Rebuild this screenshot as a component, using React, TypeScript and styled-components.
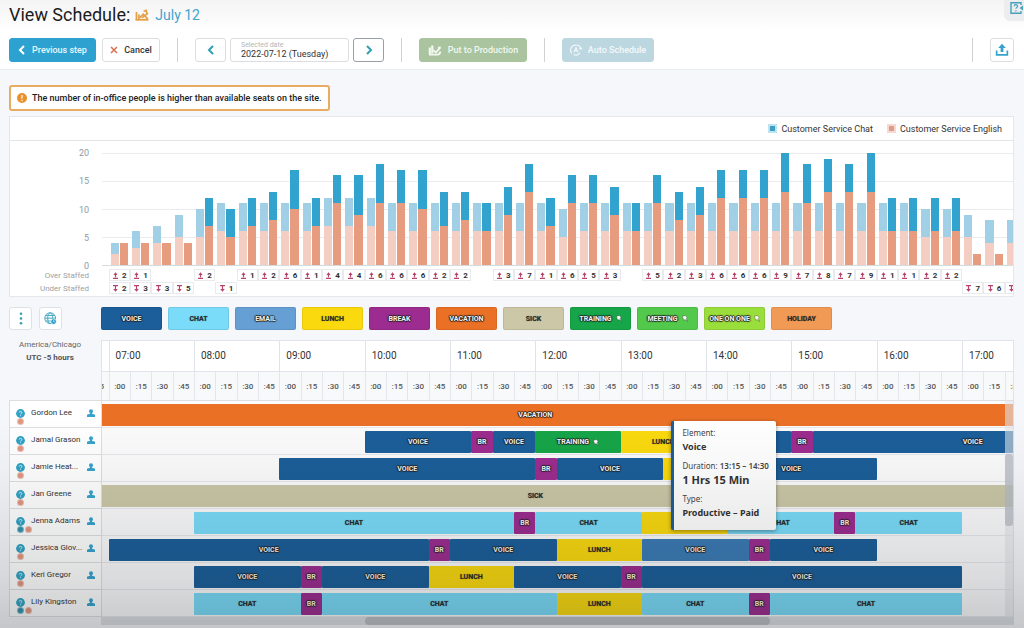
import React from "react";
import styled, { createGlobalStyle, css } from "styled-components";

/* ---------- data ---------- */

const DAY = 96; // quarters of an hour in the day
const SEVEN = 28; // 07:00 as a quarter index
const VIEW_START = 27.69; // first quarter in view
const VIEW_SPAN = 42.7; // quarters in view

type Load = { need: [number, number]; have: [number, number]; over?: number; under?: number };

const g = (
  needTotal: number,
  needEnglish: number,
  haveTotal: number,
  haveEnglish: number,
  over?: number,
  under?: number
): Load => ({
  need: [needTotal - needEnglish, needEnglish],
  have: [haveTotal - haveEnglish, haveEnglish],
  over,
  under,
});

const LOADS: Load[] = [
  g(4, 2, 4, 4, 2, 2), g(6, 3, 4, 4, 1, 3), g(7, 4, 4, 4, undefined, 3), g(9, 5, 4, 4, undefined, 5),
  g(10, 5, 12, 7, 2), g(11, 6, 10, 5, undefined, 1), g(11, 6, 12, 7, 1), g(11, 6, 13, 8, 2),
  g(11, 6, 17, 10, 6), g(11, 6, 12, 7, 1), g(12, 7, 16, 11, 4), g(12, 7, 16, 9, 4),
  g(12, 7, 18, 11, 6), g(11, 6, 17, 11, 6), g(11, 6, 17, 10, 6), g(11, 6, 13, 7, 2),
  g(11, 6, 13, 8, 2), g(11, 6, 11, 6), g(11, 6, 14, 9, 3), g(11, 6, 18, 13, 7),
  g(11, 6, 12, 7, 1), g(10, 5, 16, 11, 6), g(11, 6, 16, 11, 5), g(11, 6, 14, 9, 3),
  g(11, 6, 11, 6), g(11, 6, 16, 11, 5), g(11, 6, 13, 8, 2), g(11, 6, 14, 9, 3),
  g(11, 6, 17, 12, 6), g(11, 6, 17, 12, 6), g(11, 6, 17, 12, 6), g(11, 6, 20, 13, 9),
  g(11, 6, 18, 11, 7), g(11, 6, 19, 13, 8), g(11, 6, 18, 13, 7), g(11, 6, 20, 13, 9),
  g(11, 6, 12, 6, 1), g(11, 6, 12, 6, 1), g(10, 5, 12, 6, 2), g(10, 5, 12, 6, 2),
  g(9, 5, 2, 2, undefined, 7), g(8, 4, 2, 2, undefined, 6), g(8, 4, 2, 2, undefined, 6),
];

type Kind =
  | "VOICE" | "CHAT" | "EMAIL" | "LUNCH" | "BREAK" | "VACATION"
  | "SICK" | "TRAINING" | "MEETING" | "ONE ON ONE" | "HOLIDAY";

const KINDS: Record<Kind, { color: string; dark?: boolean; pin?: boolean }> = {
  VOICE: { color: "#1b5e99" },
  CHAT: { color: "#7adcf9", dark: true },
  EMAIL: { color: "#669fd3" },
  LUNCH: { color: "#fad90e", dark: true },
  BREAK: { color: "#9c2c8f" },
  VACATION: { color: "#ea7026" },
  SICK: { color: "#cbc7a7", dark: true },
  TRAINING: { color: "#16a548", pin: true },
  MEETING: { color: "#52c94a", pin: true },
  "ONE ON ONE": { color: "#9ade3c", pin: true },
  HOLIDAY: { color: "#f19a56", dark: true },
};

/* [kind, first quarter, last quarter], counted from 07:00 */
type Shift = [Kind, number, number, boolean?];
type Agent = { name: string; chat?: boolean; shifts: Shift[] };

const AGENTS: Agent[] = [
  { name: "Gordon Lee", shifts: [["VACATION", -28, 68]] },
  {
    name: "Jamal Grason",
    shifts: [
      ["VOICE", 12, 17], ["BREAK", 17, 18], ["VOICE", 18, 20], ["TRAINING", 20, 24],
      ["LUNCH", 24, 28], ["VOICE", 28, 32], ["BREAK", 32, 33], ["VOICE", 33, 48],
    ],
  },
  {
    name: "Jamie Heat...",
    shifts: [["VOICE", 8, 20], ["BREAK", 20, 21], ["VOICE", 21, 26], ["LUNCH", 26, 28], ["VOICE", 28, 36]],
  },
  { name: "Jan Greene", shifts: [["SICK", -28, 68]] },
  {
    name: "Jenna Adams",
    chat: true,
    shifts: [
      ["CHAT", 4, 19], ["BREAK", 19, 20], ["CHAT", 20, 25], ["LUNCH", 25, 29],
      ["CHAT", 29, 34], ["BREAK", 34, 35], ["CHAT", 35, 40],
    ],
  },
  {
    name: "Jessica Glov...",
    shifts: [
      ["VOICE", 0, 15], ["BREAK", 15, 16], ["VOICE", 16, 21], ["LUNCH", 21, 25],
      ["VOICE", 25, 30, true], ["BREAK", 30, 31], ["VOICE", 31, 36],
    ],
  },
  {
    name: "Keri Gregor",
    shifts: [
      ["VOICE", 4, 9], ["BREAK", 9, 10], ["VOICE", 10, 15], ["LUNCH", 15, 19],
      ["VOICE", 19, 24], ["BREAK", 24, 25], ["VOICE", 25, 40],
    ],
  },
  {
    name: "Lily Kingston",
    chat: true,
    shifts: [
      ["CHAT", 4, 9], ["BREAK", 9, 10], ["CHAT", 10, 21], ["LUNCH", 21, 25],
      ["CHAT", 25, 30], ["BREAK", 30, 31], ["CHAT", 31, 40],
    ],
  },
];

const HOURS = Array.from({ length: 12 }, (_, i) => i + 6);
const QUARTERS = Array.from({ length: 44 }, (_, i) => i + 27);

/* ---------- page and header ---------- */

const GlobalStyle = createGlobalStyle`
  *, *::before, *::after { box-sizing: border-box; }
  body { margin: 0; background: #f6f7fa; }
  body, button, input { font-family: Roboto, "Liberation Sans", sans-serif; }
  button { cursor: pointer; }
`;

const Page = styled.div`
  position: relative;
  min-height: 100vh;
  overflow: hidden;
  color: #333;
  background: #f6f7fa;
`;

const Shade = styled.div`
  position: absolute;
  inset: 0;
  z-index: 5;
  pointer-events: none;
  background: linear-gradient(
    to bottom,
    rgba(20, 24, 28, 0) 66%,
    rgba(20, 24, 28, 0.03) 74%,
    rgba(20, 24, 28, 0.09) 84%,
    rgba(20, 24, 28, 0.14) 92%,
    rgba(20, 24, 28, 0.22) 100%
  );
`;

const Header = styled.header`
  height: 70px;
  padding: 0 10px 0 9px;
  border-bottom: 1px solid #eaecef;
  background: linear-gradient(#f4f4f5, #fff 32px);
`;

const TitleRow = styled.div`
  display: flex;
  align-items: center;
  height: 30px;
  margin-bottom: 8px;
`;

const Title = styled.h1`
  margin: 0 5px 0 0;
  font-size: 18px;
  font-weight: 400;
  line-height: 30px;
  color: #1c1c1c;
`;

const DayName = styled.span`
  margin-left: 6px;
  font-size: 14px;
  line-height: 32px;
  color: #3fa5cd;
`;

const HelpTab = styled.button`
  align-self: flex-start;
  display: flex;
  align-items: center;
  justify-content: flex-end;
  width: 20px;
  height: 21px;
  margin: 0 -10px 0 auto;
  padding: 0;
  overflow: hidden;
  border: 0;
  border-radius: 0 0 0 6px;
  background: #ebedef;

  svg { flex: none; margin-top: -5px; }
`;

const Toolbar = styled.div`
  display: flex;
  align-items: center;
  height: 24px;
`;

type Tone = "primary" | "plain" | "green" | "pale";

const tones: Record<Tone, ReturnType<typeof css>> = {
  primary: css`background: #2da2d1; border-color: #2da2d1; color: #eaf7fc;`,
  plain: css`background: #fff; border-color: #dcdde0; color: #333;`,
  green: css`background: #a9c49e; border-color: #a9c49e; color: #f3f8f1;`,
  pale: css`background: #bdd7e1; border-color: #bdd7e1; color: #f3f9fb;`,
};

const Action = styled.button<{ $tone: Tone; $width: number }>`
  display: flex;
  flex: none;
  align-items: center;
  justify-content: center;
  gap: 6px;
  width: ${(p) => p.$width}px;
  height: 24px;
  padding: 0;
  border: 1px solid;
  border-radius: 3px;
  font-size: 9px;
  font-weight: 500;
  white-space: nowrap;
  ${(p) => tones[p.$tone]}
`;

const StepButton = styled(Action)<{ $active?: boolean }>`
  border-color: ${(p) => (p.$active ? "#9a9fa6" : "#dcdde0")};
`;

const Group = styled.div<{ $gap: number }>`
  display: flex;
  flex: none;
  gap: ${(p) => p.$gap}px;
`;

const Divider = styled.span`
  flex: none;
  width: 1px;
  height: 24px;
  margin: 0 17px;
  background: #cfd1d4;
`;

const Spacer = styled.span`
  flex: 1;
`;

const DateField = styled.label`
  display: flex;
  flex: none;
  flex-direction: column;
  width: 119px;
  height: 24px;
  padding: 2px 0 0 10px;
  border: 1px solid #dcdde0;
  border-radius: 3px;
  background: #fff;
  font-size: 7px;
  line-height: 8px;
  color: #b4b6b9;
`;

const DateInput = styled.input`
  width: 100%;
  height: 11px;
  padding: 0;
  border: 0;
  outline: 0;
  background: transparent;
  font-size: 9px;
  line-height: 11px;
  color: #333;
`;

const Main = styled.main`
  padding: 15px 10px 4px 9px;
`;

const Alert = styled.div`
  display: flex;
  align-items: center;
  gap: 5px;
  width: fit-content;
  height: 26px;
  margin-bottom: 5px;
  padding: 0 6px;
  border: 2px solid #e9ac63;
  border-radius: 3px;
  background: #fff;
  font-size: 9px;
  font-weight: 500;
  color: #222;
`;

/* ---------- chart ---------- */

const Card = styled.section`
  border: 1px solid #e4e7ec;
  background: #fff;
`;

const Legend = styled.div`
  display: flex;
  align-items: center;
  justify-content: flex-end;
  gap: 14px;
  height: 24px;
  padding-right: 11px;
  border-bottom: 1px solid #e2e4e7;
  font-size: 9px;
  color: #333;
`;

const LegendItem = styled.span<{ $color: string; $halo: string }>`
  display: flex;
  align-items: center;
  gap: 4px;

  &::before {
    content: "";
    width: 9px;
    height: 9px;
    border: 2px solid ${(p) => p.$halo};
    background: ${(p) => p.$color};
  }
`;

const ChartRow = styled.div<{ $height: number }>`
  display: grid;
  grid-template-columns: 92px minmax(0, 1fr);
  height: ${(p) => p.$height}px;
`;

const ChartBody = styled.div`
  padding: 12px 0 1px;
`;

const Scale = styled.div`
  display: flex;
  flex-direction: column;
  justify-content: space-between;
  margin: -7px 0;
  padding-right: 13px;
  text-align: right;
  font-size: 9px;
  line-height: 14px;
  color: #8f9aa3;
`;

const StaffLabel = styled.div`
  padding-right: 13px;
  text-align: right;
  font-size: 8px;
  line-height: 13px;
  color: #9c9fa3;
`;

const Viewport = styled.div`
  overflow: hidden;
`;

const Track = styled.div`
  display: grid;
  grid-template-columns: repeat(${DAY}, minmax(0, 1fr));
  width: ${(DAY / VIEW_SPAN) * 100}%;
  height: 100%;
  margin-left: ${(-VIEW_START / VIEW_SPAN) * 100}%;
`;

const Plot = styled(Viewport)`
  border-bottom: 1px solid #d6dbe0;
  background: linear-gradient(#e9ecef 1px, transparent 1px) 0 0 / 100% 28px;
`;

const Counts = styled.div`
  padding-top: 3px;
`;

const Slot = styled.div<{ $from: number; $to?: number }>`
  grid-row: 1;
  grid-column: ${(p) => p.$from + 1} / ${(p) => (p.$to ?? p.$from + 1) + 1};
  min-width: 0;
`;

const BarPair = styled(Slot)`
  display: flex;
  align-items: flex-end;
  gap: 1px;
  height: 112px;
  padding: 0 2px;
`;

const Bar = styled.div<{ $solid?: boolean }>`
  display: grid;
  flex: 1;
  background: ${(p) => (p.$solid ? "#e79c7f" : "#f4cec2")};

  > div { background: ${(p) => (p.$solid ? "#32a2cf" : "#a1cfe5")}; }
`;

const Badge = styled(Slot)`
  display: flex;
  align-items: center;
  justify-content: center;
  gap: 4px;
  height: 12px;
  padding-left: 1px;
  border: 1px solid #e9eaed;
  font-size: 8px;
  font-weight: 700;
  color: #333;
`;

/* ---------- schedule ---------- */

const Palette = styled.div`
  display: grid;
  grid-template-columns: 92px minmax(0, 1fr);
  margin: 10px 0;
`;

const Tools = styled.div`
  display: flex;
  gap: 7px;
`;

const ToolButton = styled.button`
  display: grid;
  place-items: center;
  width: 23px;
  height: 23px;
  padding: 0;
  border: 1px solid #dfe1e4;
  border-radius: 3px;
  background: #fff;
`;

const Pills = styled.div`
  display: flex;
  gap: 6px;
`;

const inkStyle = css<{ $dark?: boolean }>`
  font-size: 7px;
  font-weight: 700;
  white-space: nowrap;
  color: ${(p) => (p.$dark ? "#2b2b2b" : "#f4f4f4")};
  text-shadow: ${(p) =>
    p.$dark
      ? "0 0 1px rgba(0, 0, 0, 0.5)"
      : "1px 0 1px #222, -1px 0 1px #222, 0 1px 1px #222, 0 -1px 1px #222"};
`;

const Pill = styled.button<{ $color: string; $dark?: boolean }>`
  display: flex;
  align-items: center;
  justify-content: center;
  gap: 4px;
  flex: none;
  width: 61px;
  height: 23px;
  padding: 0;
  border: 1px solid rgba(0, 0, 0, 0.08);
  border-radius: 2px;
  background: ${(p) => p.$color};
  ${inkStyle}
`;

const Schedule = styled.section`
  display: grid;
  grid-template-columns: 92px minmax(0, 1fr);
`;

const Zone = styled.div`
  margin-top: -2px;
  padding-right: 10px;
  text-align: center;
  font-size: 8px;
  line-height: 13px;
  color: #666;

  strong { display: block; color: #555; }
`;

const Axis = styled(Viewport)`
  height: 60px;
  border: solid #e0e3e9;
  border-width: 1px 1px 0 1px;
`;

const AxisLine = styled.div<{ $height: number; $tint?: boolean }>`
  height: ${(p) => p.$height}px;
  border-bottom: 1px solid #e0e3e9;
  background: ${(p) => (p.$tint ? "#f8f9fb" : "#fff")};
`;

const HourCell = styled(Slot)`
  padding-left: 6px;
  border-left: 1px solid #e0e3e9;
  font-size: 10px;
  line-height: 30px;
  color: #333;
`;

const QuarterCell = styled(Slot)`
  border-left: 1px solid #e4e6eb;
  text-align: center;
  font-size: 8px;
  font-weight: 500;
  line-height: 29px;
  color: #555;
`;

const Names = styled.ul`
  margin: 0;
  padding: 0;
  list-style: none;
  border: 1px solid #dcdee2;
  border-width: 1px 0 0 1px;
  background: #fff;
`;

const NameRow = styled.li`
  display: grid;
  grid-template-columns: 15px minmax(0, 1fr) 14px;
  height: 27px;
  padding-left: 6px;
  border-bottom: 1px solid #dcdee2;
  font-size: 8px;
  line-height: 24px;
  white-space: nowrap;
  color: #333;
`;

const Marks = styled.span`
  display: flex;
  flex-direction: column;
  padding-top: 8px;
`;

const Dots = styled.span`
  display: flex;
  gap: 1px;
  padding-left: 1px;
`;

const Dot = styled.i<{ $color: string }>`
  flex: none;
  width: 7px;
  height: 7px;
  border: 1px solid rgba(255, 255, 255, 0.4);
  border-radius: 50%;
  background: ${(p) => p.$color};
`;

const UserMark = styled.span`
  padding-top: 8px;
  line-height: 0;
`;

const Timeline = styled.div`
  position: relative;
  border: solid #dcdee2;
  border-width: 1px 1px 0;
  background: #fbfbfc;
`;

const ShiftRow = styled(Viewport)`
  height: 27px;
  padding: 3px 0 1px;
  border-bottom: 1px solid #e6e7ea;
`;

const Block = styled(Slot)<{ $color: string; $dark?: boolean }>`
  display: flex;
  align-items: center;
  justify-content: center;
  gap: 4px;
  height: 22px;
  border-radius: 1px;
  background: ${(p) => p.$color};
  ${inkStyle}
`;

const VerticalScroll = styled.div`
  position: absolute;
  top: 0;
  right: 0;
  bottom: 0;
  width: 8px;
  padding-top: 53px;
  background: rgba(225, 228, 231, 0.6);

  &::before {
    content: "";
    display: block;
    height: 72px;
    border-radius: 3px;
    background: rgba(150, 158, 166, 0.45);
  }
`;

const HorizontalScroll = styled.div`
  grid-column: 2;
  height: 8px;
  padding: 0 26.7% 0 28.9%;
  background: #dcdfe3;

  &::before {
    content: "";
    display: block;
    height: 8px;
    border-radius: 4px;
    background: #bcc0c5;
  }
`;

const Tooltip = styled.dl`
  position: absolute;
  top: 20px;
  left: 62.5%;
  z-index: 2;
  width: 105px;
  height: 109px;
  margin: 0;
  padding: 6px 0 0 8px;
  border-left: 3px solid #1b5e99;
  border-radius: 2px;
  background: #fff;
  box-shadow: 0 1px 4px rgba(0, 0, 0, 0.4);
  font-family: "Noto Sans", sans-serif;
  font-size: 8px;
  line-height: 12px;
  white-space: nowrap;
  color: #444;

  b { font-weight: 600; }
`;

const TipValue = styled.dd<{ $big?: boolean }>`
  margin: 0 0 6px;
  font-size: ${(p) => (p.$big ? 11 : 9)}px;
  font-weight: 700;
  line-height: 15px;
  color: #333;
`;

/* ---------- icons ---------- */

const Chevron = ({ back, color }: { back?: boolean; color: string }) => (
  <svg width="8" height="10" viewBox="0 0 8 10" fill="none" stroke={color} strokeWidth="2">
    <path d={back ? "M6 1 2 5l4 4" : "M2 1l4 4-4 4"} />
  </svg>
);

const Cross = () => (
  <svg width="8" height="8" viewBox="0 0 8 8" stroke="#dd7350" strokeWidth="1.6">
    <path d="M1 1l6 6M7 1 1 7" />
  </svg>
);

const PlanIcon = () => (
  <svg width="14" height="12" viewBox="0 0 14 12" fill="none" stroke="#e5a04a">
    <path d="M1.500 3v8M4 5.500V11" strokeWidth="1.800" />
    <path d="M.6 10.800h12.800" strokeWidth="1.800" />
    <path d="M5 8.600 8.200 5.200l4.600 5" strokeWidth="1.800" />
    <path d="M7 8.900 13 4.200M8.600 2.200l2.600-.8.600 3.200" strokeWidth="1.700" />
  </svg>
);

const ProductionIcon = () => (
  <svg width="14" height="12" viewBox="0 0 14 12" fill="none" stroke="#f3f8f1">
    <path d="M1.800 3.400V10M4.300 1.400v8" strokeWidth="2.200" />
    <path d="M1 10.600h8.400c2 0 2.800-1.200 2.800-3" strokeWidth="1.800" />
    <path d="M5.400 6.200 7.800 8.400l4-4.200M10 3.700l2.800-.2" strokeWidth="1.800" />
  </svg>
);

const AutoIcon = () => (
  <svg width="12" height="12" viewBox="0 0 12 12" fill="none" stroke="#f3f9fb" strokeWidth="1.100">
    <path d="M2 9.400A5 5 0 0 1 6 1a5 5 0 0 1 4.900 4M10 8.800A5 5 0 0 1 3.600 10.400" />
    <path d="M4 8.200 6 3.600l2 4.600M4.800 6.800h2.400" />
    <path d="M9.400 4.300 11 5.300l.7-1.700" />
  </svg>
);

const UploadIcon = () => (
  <svg width="14" height="14" viewBox="0 0 14 14" fill="#36a3cc">
    <path d="M7 .8 10.800 5H8.400v4H5.600V5H3.200z" />
    <path d="M.8 7.500h1.700v3.400h9V7.500h1.700v5.200H.8z" />
  </svg>
);

const HelpIcon = () => (
  <svg width="14" height="12" viewBox="0 0 14 12" fill="none" stroke="#4a9fba" strokeWidth="1.400">
    <path d="M11 3V.8H1v10.400h10V9" />
    <path d="M4.200 4.200c0-2 3.400-2 3.400 0 0 1.200-1.700 1.200-1.700 2.600M5.900 8.200v1.200" strokeWidth="1.200" />
    <path d="M9.600 6 13 3.600v4.800z" fill="#4a9fba" stroke="none" />
  </svg>
);

const WarnIcon = () => (
  <svg width="10" height="10" viewBox="0 0 10 10">
    <circle cx="5" cy="5" r="5" fill="#e8912d" />
    <path d="M5 2v3.600M5 6.800V8" stroke="#fff" strokeWidth="1.200" />
  </svg>
);

const DotsIcon = () => (
  <svg width="4" height="13" viewBox="0 0 4 13" fill="#369fae">
    <circle cx="2" cy="1.800" r="1.300" />
    <circle cx="2" cy="6.500" r="1.300" />
    <circle cx="2" cy="11.200" r="1.300" />
  </svg>
);

const GlobeIcon = () => (
  <svg width="13" height="13" viewBox="0 0 13 13" fill="none" stroke="#46a9c6" strokeWidth="1">
    <circle cx="6.200" cy="6.200" r="5.400" />
    <ellipse cx="6.200" cy="6.200" rx="2.500" ry="5.400" />
    <path d="M.8 6.200h10.800M1.600 3.400h9.200M1.600 9h9.200" />
    <circle cx="9.600" cy="9.600" r="2.700" fill="#2c9cc4" stroke="#fff" strokeWidth=".6" />
    <path d="M9.600 8.300v1.400h1" stroke="#fff" strokeWidth=".7" />
  </svg>
);

const QuestionIcon = () => (
  <svg width="9" height="9" viewBox="0 0 9 9">
    <circle cx="4.500" cy="4.500" r="4.400" fill="#2ea2c4" />
    <path
      d="M3.200 3.600c0-1.700 2.700-1.600 2.700 0 0 .9-1.300 1-1.300 1.900M4.600 6.300v.9"
      fill="none"
      stroke="#fff"
      strokeWidth=".8"
    />
  </svg>
);

const UserIcon = () => (
  <svg width="8" height="8" viewBox="0 0 8 8" fill="#36a3cc">
    <circle cx="4" cy="2.300" r="2" />
    <path d="M3 3.500h2v1.200l2.600.8c.3.200.4.400.4.800V8H0V6.300c0-.4.100-.6.400-.8L3 4.700z" />
  </svg>
);

const PinIcon = () => (
  <svg width="6" height="7" viewBox="0 0 6 7">
    <path d="M.4 1.200 3.800.6l1.200 2-.8.900 1.500 3-2.700-1.900-1.300.6z" fill="#fff" stroke="#333" strokeWidth=".4" />
  </svg>
);

const StaffIcon = ({ under }: { under?: boolean }) => (
  <svg width="5" height="7" viewBox="0 0 5 7" fill="#b5436a">
    <path
      d={
        under
          ? "M0 0h5v1.200H0zM1.900 1.200h1.200V4H4.800L2.500 6.800.2 4h1.700z"
          : "M0 5.800h5V7H0zM1.900 5.200h1.200V3H4.600L2.500.2.4 3h1.500z"
      }
    />
  </svg>
);

/* ---------- parts ---------- */

const Staffing = ({ under }: { under?: boolean }) => (
  <ChartRow $height={13}>
    <StaffLabel>{under ? "Under Staffed" : "Over Staffed"}</StaffLabel>
    <Viewport>
      <Track>
        {LOADS.map((load, i) => {
          const count = under ? load.under : load.over;
          return count === undefined ? null : (
            <Badge key={i} $from={SEVEN + i}>
              <StaffIcon under={under} />
              {count}
            </Badge>
          );
        })}
      </Track>
    </Viewport>
  </ChartRow>
);

const Chart = () => (
  <Card>
    <Legend>
      <LegendItem $color="#3d9fc0" $halo="#bfe3f0">Customer Service Chat</LegendItem>
      <LegendItem $color="#dd9c8c" $halo="#f8d9d1">Customer Service English</LegendItem>
    </Legend>
    <ChartBody>
      <ChartRow $height={113}>
        <Scale>
          {[20, 15, 10, 5, 0].map((n) => (
            <span key={n}>{n}</span>
          ))}
        </Scale>
        <Plot>
          <Track>
            {LOADS.map((load, i) => (
              <BarPair key={i} $from={SEVEN + i}>
                {[load.need, load.have].map(([chat, english], side) => (
                  <Bar
                    key={side}
                    $solid={side === 1}
                    style={{
                      height: `${(chat + english) * 5}%`,
                      gridTemplateRows: `${chat}fr ${english}fr`,
                    }}
                  >
                    <div />
                  </Bar>
                ))}
              </BarPair>
            ))}
          </Track>
        </Plot>
      </ChartRow>
      <Counts>
        <Staffing />
        <Staffing under />
      </Counts>
    </ChartBody>
  </Card>
);

const pad = (n: number) => String(n).padStart(2, "0");

export default function App() {
  return (
    <Page>
      <GlobalStyle />
      <Header>
        <TitleRow>
          <Title>View Schedule:</Title>
          <PlanIcon />
          <DayName>July 12</DayName>
          <HelpTab aria-label="Help">
            <HelpIcon />
          </HelpTab>
        </TitleRow>
        <Toolbar>
          <Group $gap={6}>
            <Action $tone="primary" $width={87}>
              <Chevron back color="#fff" />
              Previous step
            </Action>
            <Action $tone="plain" $width={58}>
              <Cross />
              Cancel
            </Action>
          </Group>
          <Divider />
          <Group $gap={4}>
            <StepButton $tone="plain" $width={31} aria-label="Previous day">
              <Chevron back color="#2f9fb5" />
            </StepButton>
            <DateField>
              Selected date
              <DateInput readOnly value="2022-07-12 (Tuesday)" />
            </DateField>
            <StepButton $tone="plain" $width={31} $active aria-label="Next day">
              <Chevron color="#2f9fb5" />
            </StepButton>
          </Group>
          <Divider />
          <Action $tone="green" $width={108}>
            <ProductionIcon />
            Put to Production
          </Action>
          <Divider />
          <Action $tone="pale" $width={92}>
            <AutoIcon />
            Auto Schedule
          </Action>
          <Spacer />
          <Divider />
          <Action $tone="plain" $width={24} aria-label="Upload">
            <UploadIcon />
          </Action>
        </Toolbar>
      </Header>

      <Main>
        <Alert role="alert">
          <WarnIcon />
          The number of in-office people is higher than available seats on the site.
        </Alert>

        <Chart />

        <Palette>
          <Tools>
            <ToolButton aria-label="More">
              <DotsIcon />
            </ToolButton>
            <ToolButton aria-label="Time zone">
              <GlobeIcon />
            </ToolButton>
          </Tools>
          <Pills>
            {(Object.keys(KINDS) as Kind[]).map((kind) => (
              <Pill key={kind} $color={KINDS[kind].color} $dark={KINDS[kind].dark}>
                {kind}
                {KINDS[kind].pin && <PinIcon />}
              </Pill>
            ))}
          </Pills>
        </Palette>

        <Schedule>
          <Zone>
            America/Chicago
            <strong>UTC -5 hours</strong>
          </Zone>
          <Axis>
            <AxisLine $height={31}>
              <Track>
                {HOURS.map((h) => (
                  <HourCell key={h} $from={h * 4} $to={h * 4 + 4}>
                    {h > 6 && `${pad(h)}:00`}
                  </HourCell>
                ))}
              </Track>
            </AxisLine>
            <AxisLine $height={29} $tint>
              <Track>
                {QUARTERS.map((q) => (
                  <QuarterCell key={q} $from={q}>
                    :{pad((q % 4) * 15)}
                  </QuarterCell>
                ))}
              </Track>
            </AxisLine>
          </Axis>

          <Names>
            {AGENTS.map((agent) => (
              <NameRow key={agent.name}>
                <Marks>
                  <QuestionIcon />
                  <Dots>
                    {agent.chat && <Dot $color="#2f92ab" />}
                    <Dot $color="#e2957f" />
                  </Dots>
                </Marks>
                {agent.name}
                <UserMark>
                  <UserIcon />
                </UserMark>
              </NameRow>
            ))}
          </Names>

          <Timeline>
            {AGENTS.map((agent) => (
              <ShiftRow key={agent.name}>
                <Track>
                  {agent.shifts.map(([kind, from, to, lit]) => (
                    <Block
                      key={from}
                      $from={SEVEN + from}
                      $to={SEVEN + to}
                      $color={lit ? "#3a7ab4" : KINDS[kind].color}
                      $dark={KINDS[kind].dark}
                    >
                      {kind === "BREAK" ? "BR" : kind}
                      {KINDS[kind].pin && <PinIcon />}
                    </Block>
                  ))}
                </Track>
              </ShiftRow>
            ))}
            <VerticalScroll />
            <Tooltip>
              <dt>Element:</dt>
              <TipValue>Voice</TipValue>
              <dt>
                Duration: <b>13:15 – 14:30</b>
              </dt>
              <TipValue $big>1 Hrs 15 Min</TipValue>
              <dt>Type:</dt>
              <TipValue>Productive – Paid</TipValue>
            </Tooltip>
          </Timeline>

          <HorizontalScroll />
        </Schedule>
      </Main>
      <Shade />
    </Page>
  );
}
